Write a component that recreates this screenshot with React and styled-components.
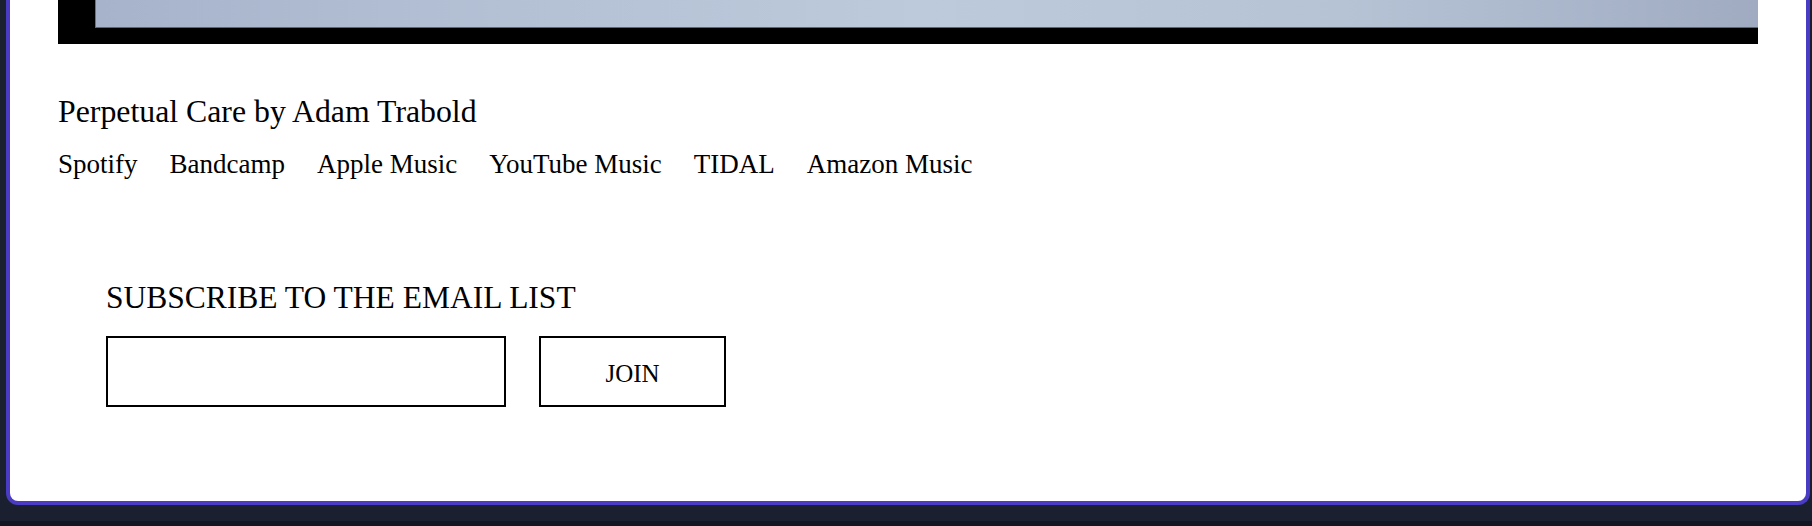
import React from "react";
import styled, { createGlobalStyle } from "styled-components";

const GlobalStyle = createGlobalStyle`
  html, body {
    margin: 0;
    padding: 0;
    background: #1b2030;
  }
  body {
    font-family: "Liberation Serif", "Times New Roman", serif;
    color: #000;
  }
`;

const Page = styled.div`
  display: flex;
  flex-direction: column;
  width: 1812px;
  height: 526px;
  overflow: hidden;
  background: #1b2030;
`;

const Card = styled.main`
  margin: 0 2px 0 6px;
  background: #fff;
  border: 4px solid #4a3bc4;
  border-top: none;
  border-radius: 0 0 12px 12px;
  padding: 0 48px 94px 48px;
  display: flex;
  flex-direction: column;
`;

const Media = styled.div`
  height: 44px;
  background: #000;
  padding: 0 0 16px 37px;
  box-sizing: border-box;
  display: flex;
`;

const Artwork = styled.div`
  flex: 1;
  border-left: 1px solid #6a7286;
  border-bottom: 1px solid #5e6578;
  background: linear-gradient(
    90deg,
    #a6b3cb 0%,
    #b4c1d5 25%,
    #bdcadb 50%,
    #b6c3d5 75%,
    #a0abc2 100%
  );
`;

const Title = styled.h2`
  margin: 50px 0 0;
  font-size: 31.8px;
  line-height: 36px;
  font-weight: 400;
`;

const LinkRow = styled.nav`
  margin-top: 18px;
  display: flex;
  gap: 32px;
  font-size: 27px;
  line-height: 32px;
`;

const StreamLink = styled.a`
  color: #000;
  text-decoration: none;
`;

const Subscribe = styled.section`
  margin-top: 100px;
  padding-left: 48px;
  display: flex;
  flex-direction: column;
  gap: 20px;
`;

const SubscribeHeading = styled.h3`
  margin: 0;
  font-size: 31.5px;
  line-height: 36px;
  font-weight: 400;
`;

const Form = styled.form`
  display: flex;
  gap: 33px;
  margin: 0;
`;

const EmailInput = styled.input`
  width: 400px;
  height: 71px;
  box-sizing: border-box;
  border: 2px solid #000;
  border-radius: 0;
  background: #fff;
  padding: 0 12px;
  font-family: "Liberation Serif", serif;
  font-size: 22px;
  outline: none;
`;

const JoinButton = styled.button`
  width: 187px;
  height: 71px;
  box-sizing: border-box;
  border: 2px solid #000;
  border-radius: 0;
  background: #fff;
  color: #000;
  font-family: "Liberation Serif", "Times New Roman", serif;
  font-size: 25px;
  padding: 4px 0 0;
  cursor: pointer;
`;

const BottomGap = styled.div`
  height: 16px;
  background: #1b2030;
`;

const BottomStrip = styled.div`
  flex: 1;
  background: #121522;
`;

const links = ["Spotify", "Bandcamp", "Apple Music", "YouTube Music", "TIDAL", "Amazon Music"];

export default function App() {
  return (
    <>
      <GlobalStyle />
      <Page>
        <Card>
          <Media>
            <Artwork />
          </Media>
          <Title>Perpetual Care by Adam Trabold</Title>
          <LinkRow>
            {links.map((l) => (
              <StreamLink key={l} href="#">
                {l}
              </StreamLink>
            ))}
          </LinkRow>
          <Subscribe>
            <SubscribeHeading>SUBSCRIBE TO THE EMAIL LIST</SubscribeHeading>
            <Form onSubmit={(e) => e.preventDefault()}>
              <EmailInput type="email" aria-label="Email" />
              <JoinButton type="submit">JOIN</JoinButton>
            </Form>
          </Subscribe>
        </Card>
        <BottomGap />
        <BottomStrip />
      </Page>
    </>
  );
}
